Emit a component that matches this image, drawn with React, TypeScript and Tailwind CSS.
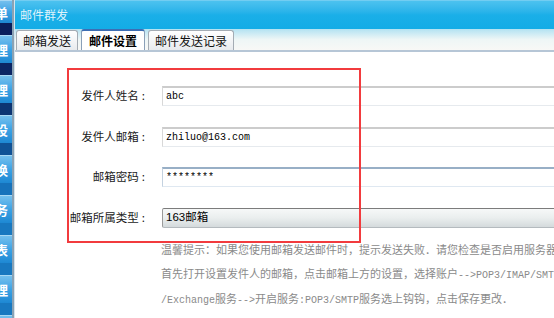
import React from "react";

const cjk = { fontFamily: '"Noto Sans CJK SC", "Noto Sans", sans-serif' };
const mixed = { fontFamily: '"Liberation Mono", "Noto Sans CJK SC", monospace' };

const sideChars = ["理", "理", "设", "换", "务", "表", "理", "务"];
const stripColors = [
  "bg-[#0a1f5c]",
  "bg-[#0b2665]",
  "bg-[#0c3573]",
  "bg-[#0f5296]",
  "bg-[#1672bb]",
  "bg-[#1878c0]",
  "bg-[#1878c0]",
  "bg-[#1878c0]",
];

const hints = [
  "温馨提示：如果您使用邮箱发送邮件时，提示发送失败．请您检查是否启用服务器",
  "首先打开设置发件人的邮箱，点击邮箱上方的设置，选择账户-->POP3/IMAP/SMTP",
  "/Exchange服务-->开启服务:POP3/SMTP服务选上钩钩，点击保存更改．",
];

// ascii runs are narrower, like a bitmap song font
function HintLine({ text }: { text: string }) {
  const parts = text.split(/([\x20-\x7e]+)/).filter(Boolean);
  return (
    <div>
      {parts.map((p, i) =>
        /^[\x20-\x7e]+$/.test(p) ? (
          <span key={i} className="text-[10px]">
            {p}
          </span>
        ) : (
          <span key={i}>{p}</span>
        ),
      )}
    </div>
  );
}

// the menu is scrolled off to the left, only the tail of each label shows
function SideButton({ ch, h }: { ch: string; h: string }) {
  return (
    <div
      className={`${h} flex shrink-0 items-center justify-start overflow-hidden border-t border-[#a8d8f4] bg-gradient-to-b from-[#74c0ee] via-[#3aa2e4] to-[#1d88d3] text-[13px] font-bold leading-none text-white`}
      style={cjk}
    >
      <span className="-ml-[5px]">{ch}</span>
    </div>
  );
}

function Sidebar() {
  return (
    <div className="flex w-[12px] shrink-0 flex-col overflow-hidden">
      <SideButton ch="单" h="h-[23px]" />
      {sideChars.map((ch, i) => (
        <React.Fragment key={i}>
          <div className={`h-[12px] shrink-0 ${stripColors[i]}`} />
          <SideButton ch={ch} h="h-[28px]" />
        </React.Fragment>
      ))}
    </div>
  );
}

function Tab({ label, active }: { label: string; active?: boolean }) {
  if (active) {
    return (
      <div
        className="flex h-[21px] items-center rounded-t-[3px] border border-b-0 border-[#8aa0b8] border-t-2 border-t-[#3c6eb4] bg-white px-[7px] text-[12px] font-bold text-black"
        style={cjk}
      >
        {label}
      </div>
    );
  }
  return (
    <div
      className="flex h-[20px] items-center rounded-t-[3px] border border-b-0 border-[#a4acb4] bg-gradient-to-b from-[#ffffff] to-[#e8ebee] px-[6px] text-[12px] text-[#111]"
      style={cjk}
    >
      {label}
    </div>
  );
}

function Row({
  label,
  mt,
  children,
}: {
  label: string;
  mt: string;
  children: React.ReactNode;
}) {
  return (
    <div className={`flex h-[20px] items-center ${mt}`}>
      <div
        className="w-[130px] shrink-0 text-right text-[11.5px] leading-none text-[#1a1a1a]"
        style={cjk}
      >
        {label}
        <span className="ml-[3px]">:</span>
      </div>
      <div className="ml-[17px] h-full flex-1">{children}</div>
    </div>
  );
}

function TextBox({ value, focus }: { value: string; focus?: boolean }) {
  return (
    <div
      className={`flex h-full items-center border-b border-l border-t-2 bg-white pl-[3px] text-[10px] text-black ${
        focus
          ? "border-t-[#98afc6] border-b-[#dfe8f1] border-l-[#c4d2e0]"
          : "border-t-[#cccccc] border-b-[#e6eaee] border-l-[#d8d8d8]"
      }`}
      style={{ fontFamily: '"Liberation Mono", monospace' }}
    >
      {value}
    </div>
  );
}

export default function App() {
  return (
    <div className="flex h-[318px] w-[554px] overflow-hidden bg-white">
      <Sidebar />
      <div className="w-[2px] shrink-0 bg-[#8aa2b4]" />
      <div className="w-[1px] shrink-0 bg-[#d6e4ec]" />
      <div className="flex min-w-0 flex-1 flex-col overflow-hidden">
        <div className="flex h-[29px] shrink-0 items-center border-t border-[#72cdf2] bg-gradient-to-b from-[#4cc2ef] via-[#1aafe8] to-[#13ace6] pl-[5px]">
          <span className="text-[12px] text-[#dff3fb]" style={cjk}>
            邮件群发
          </span>
        </div>
        <div className="flex h-[23px] shrink-0 items-end gap-[3px] border-b-2 border-[#b6c6d6] bg-gradient-to-b from-[#b2e2f2] via-[#eef6f6] to-[#f8f8f6] pl-[1px]">
          <Tab label="邮箱发送" />
          <Tab label="邮件设置" active />
          <Tab label="邮件发送记录" />
        </div>
        <div className="relative flex-1">
          <div className="absolute left-[52px] top-[16px] h-[175px] w-[294px] border-2 border-[#f23b3e]" />
          <Row label="发件人姓名" mt="mt-[34px]">
            <TextBox value="abc" />
          </Row>
          <Row label="发件人邮箱" mt="mt-[21px]">
            <TextBox value="zhiluo@163.com" />
          </Row>
          <Row label="邮箱密码" mt="mt-[20px]">
            <TextBox value="********" focus />
          </Row>
          <Row label="邮箱所属类型" mt="mt-[21px]">
            <div
              className="flex h-full items-center rounded-l-[2px] border border-t-[#7c7c7c] border-l-[#9a9a9a] border-b-[#b4babe] border-r-0 bg-gradient-to-b from-[#f6f8f8] via-[#eaeeee] to-[#d4dadc] pl-[3px] text-[11.5px] text-black"
              style={{ fontFamily: '"Liberation Sans", "Noto Sans CJK SC", sans-serif' }}
            >
              163邮箱
            </div>
          </Row>
          <div
            className="ml-[146px] mt-[11px] whitespace-nowrap text-[11px] leading-[24px] text-[#8a8a8a]"
            style={mixed}
          >
            {hints.map((h) => (
              <HintLine key={h} text={h} />
            ))}
          </div>
        </div>
      </div>
    </div>
  );
}
